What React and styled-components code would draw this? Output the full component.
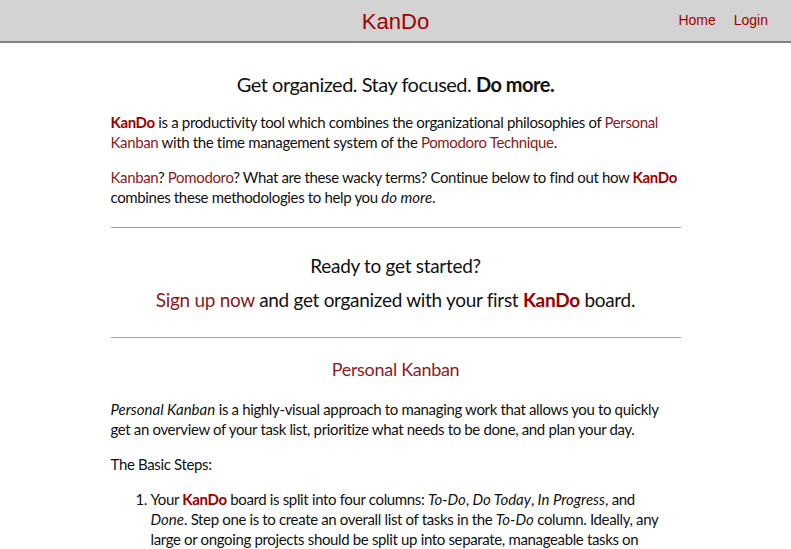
import React from "react";
import styled, { createGlobalStyle } from "styled-components";

const GlobalStyle = createGlobalStyle`
  body {
    margin: 0;
    background: #ffffff;
    font-family: "Lato", "Open Sans", sans-serif;
    color: #111;
  }
`;

const App = () => {
  return (
    <>
      <GlobalStyle />
      <Header>
        <Brand>KanDo</Brand>
        <Nav>
          <NavLink href="#">Home</NavLink>
          <NavLink href="#">Login</NavLink>
        </Nav>
      </Header>

      <Main>
        <Tagline>
          Get organized. Stay focused. <strong>Do more.</strong>
        </Tagline>
        <Para>
          <Brandy>KanDo</Brandy> is a productivity tool which combines the organizational
          philosophies of <Link href="#">Personal Kanban</Link> with the time management system of
          the <Link href="#">Pomodoro Technique</Link>.
        </Para>
        <Para>
          <Link href="#">Kanban</Link>? <Link href="#">Pomodoro</Link>? What are these wacky terms?
          Continue below to find out how <Brandy>KanDo</Brandy> combines these methodologies to
          help you <em>do more</em>.
        </Para>

        <Rule />

        <Cta>
          <CtaLine>Ready to get started?</CtaLine>
          <CtaLine>
            <Link href="#">Sign up now</Link> and get organized with your first{" "}
            <Brandy>KanDo</Brandy> board.
          </CtaLine>
        </Cta>

        <Rule />

        <SectionTitle>Personal Kanban</SectionTitle>
        <Para>
          <em>Personal Kanban</em> is a highly-visual approach to managing work that allows you to
          quickly get an overview of your task list, prioritize what needs to be done, and plan
          your day.
        </Para>
        <Para>The Basic Steps:</Para>
        <Steps>
          <li>
            Your <Brandy>KanDo</Brandy> board is split into four columns: <em>To-Do</em>,{" "}
            <em>Do Today</em>, <em>In Progress</em>, and <em>Done</em>. Step one is to create an
            overall list of tasks in the <em>To-Do</em> column. Ideally, any large or ongoing
            projects should be split up into separate, manageable tasks on their own cards.
          </li>
        </Steps>
      </Main>
    </>
  );
};

const Header = styled.header`
  position: relative;
  height: 41px;
  background: #d3d3d3;
  border-bottom: 2px solid #828282;
  display: flex;
  align-items: center;
  justify-content: center;
  font-family: "Liberation Sans", Arial, sans-serif;
`;

const Brand = styled.h1`
  margin: 2px 0 0;
  font-size: 22px;
  font-weight: normal;
  color: #a30000;
`;

const Nav = styled.nav`
  position: absolute;
  right: 23px;
  top: 12px;
  display: flex;
  gap: 18px;
`;

const NavLink = styled.a`
  font-size: 14px;
  color: #a30000;
  text-decoration: none;
`;

const Main = styled.main`
  width: 570px;
  margin: 0 auto;
  padding-top: 28px;
  font-size: 15px;
  line-height: 20px;
  letter-spacing: -0.35px;

  em {
    letter-spacing: 0;
  }
`;

const Tagline = styled.h2`
  margin: 0 0 15px;
  text-align: center;
  font-size: 20px;
  font-weight: 400;
  line-height: 26px;
  letter-spacing: -0.5px;

  strong {
    font-weight: 700;
  }
`;

const Para = styled.p`
  margin: 0 0 15px;
`;

const Link = styled.a`
  color: #8b1a1a;
  text-decoration: none;
`;

const Brandy = styled.strong`
  color: #990000;
  font-weight: 700;
`;

const Rule = styled.hr`
  margin: 20px 0 0;
  border: none;
  border-top: 1px solid #a0a0a0;
`;

const Cta = styled.div`
  padding: 21px 0 0;
  text-align: center;
  font-size: 19px;
  line-height: 34px;
  letter-spacing: -0.3px;
`;

const CtaLine = styled.div``;

const SectionTitle = styled.h3`
  margin: 19px 0 18px;
  text-align: center;
  font-size: 18px;
  font-weight: normal;
  line-height: 24px;
  letter-spacing: -0.3px;
  color: #8b1a1a;
`;

const Steps = styled.ol`
  margin: 0;
  padding: 0 14px 0 40px;
`;

export default App;
